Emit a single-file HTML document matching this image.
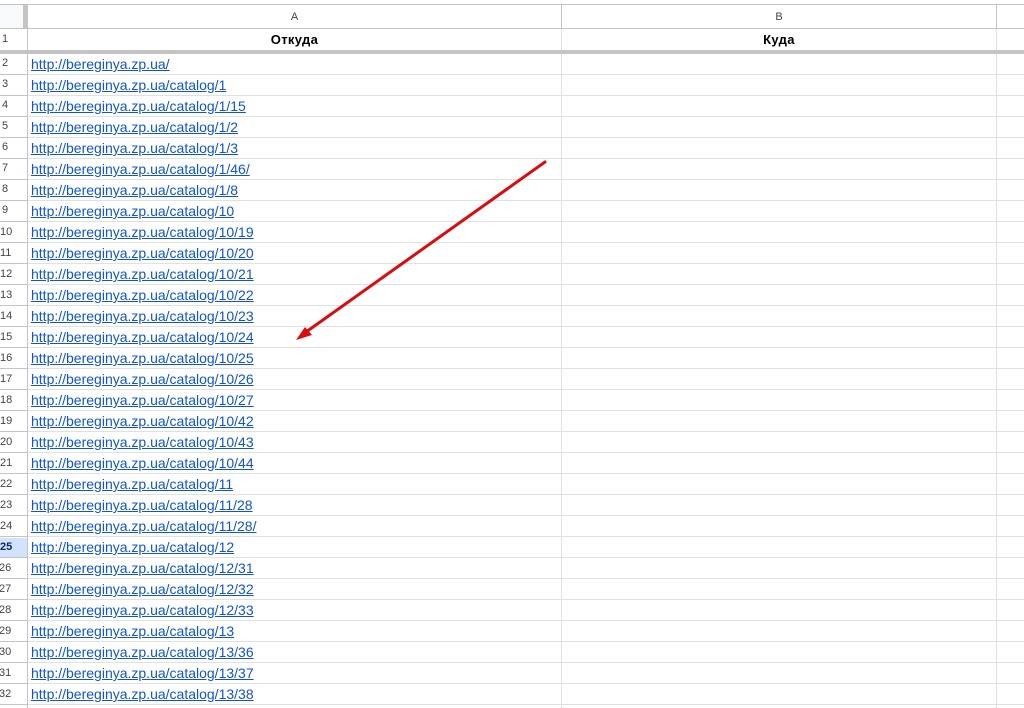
<!DOCTYPE html>
<html><head><meta charset="utf-8"><style>
html,body{margin:0;padding:0;background:#fff;overflow:hidden}
#s{position:relative;width:1024px;height:708px;overflow:hidden;font-family:"Liberation Sans",sans-serif}
.h,.v{position:absolute}
.h{left:0;width:1024px;height:1px;background:linear-gradient(to right,#c4c4c4 27px,#e1e1e1 27px)}
.v{width:1px;background:#e1e1e1}
.n{position:absolute;left:0;margin-top:1px;width:26px;height:20px;line-height:18px;font-size:11px;color:#444;white-space:nowrap}
.l{position:absolute;left:31px;height:20px;line-height:20px;font-size:14px;color:#1155cc;text-decoration:underline;white-space:nowrap}
.t{position:absolute;font-size:13px;font-weight:bold;color:#000;text-align:center;line-height:20px;letter-spacing:.35px}
.c{position:absolute;font-size:11px;color:#444;text-align:center;line-height:14px}
</style></head><body><div id="s">
<div style="position:absolute;left:0;top:5px;width:23px;height:23px;background:#f8f9fa"></div>
<div style="position:absolute;left:23px;top:5px;width:5px;height:23px;background:#c4c4c4"></div>
<div style="position:absolute;left:0;top:538px;width:27px;height:19px;background:#d3e3fd"></div>

<div class="h" style="top:74px"></div><div class="h" style="top:95px"></div><div class="h" style="top:116px"></div><div class="h" style="top:137px"></div><div class="h" style="top:158px"></div><div class="h" style="top:179px"></div><div class="h" style="top:200px"></div><div class="h" style="top:221px"></div><div class="h" style="top:242px"></div><div class="h" style="top:263px"></div><div class="h" style="top:284px"></div><div class="h" style="top:305px"></div><div class="h" style="top:326px"></div><div class="h" style="top:347px"></div><div class="h" style="top:368px"></div><div class="h" style="top:389px"></div><div class="h" style="top:410px"></div><div class="h" style="top:431px"></div><div class="h" style="top:452px"></div><div class="h" style="top:473px"></div><div class="h" style="top:494px"></div><div class="h" style="top:515px"></div><div class="h" style="top:536px"></div><div class="h" style="top:557px"></div><div class="h" style="top:578px"></div><div class="h" style="top:599px"></div><div class="h" style="top:620px"></div><div class="h" style="top:641px"></div><div class="h" style="top:662px"></div><div class="h" style="top:683px"></div><div class="h" style="top:704px"></div>

<div class="v" style="left:27px;top:28px;height:680px;background:#c4c4c4"></div>
<div class="v" style="left:561px;top:4px;height:24px;background:#c4c4c4"></div>
<div class="v" style="left:996px;top:4px;height:24px;background:#c4c4c4"></div>
<div class="v" style="left:561px;top:28px;height:680px"></div>
<div class="v" style="left:996px;top:28px;height:680px"></div>

<div class="h" style="top:4px;background:#c4c4c4"></div>
<div class="h" style="top:28px;background:#c4c4c4"></div>
<div class="h" style="top:50px;height:4px;background:#c4c4c4"></div>

<div class="c" style="left:28px;width:533px;top:10px">A</div>
<div class="c" style="left:562px;width:434px;top:10px">B</div>
<div class="t" style="left:28px;width:533px;top:30px">Откуда</div>
<div class="t" style="left:562px;width:434px;top:30px">Куда</div>

<div class="n" style="left:2px;top:29px">1</div>
<div class="n" style="left:2px;top:53px">2</div>
<div class="n" style="left:2px;top:74px">3</div>
<div class="n" style="left:2px;top:95px">4</div>
<div class="n" style="left:2px;top:116px">5</div>
<div class="n" style="left:2px;top:137px">6</div>
<div class="n" style="left:2px;top:158px">7</div>
<div class="n" style="left:2px;top:179px">8</div>
<div class="n" style="left:2px;top:200px">9</div>
<div class="n" style="top:222px">10</div><div class="n" style="top:243px">11</div><div class="n" style="top:264px">12</div><div class="n" style="top:285px">13</div><div class="n" style="top:306px">14</div><div class="n" style="top:327px">15</div><div class="n" style="top:348px">16</div><div class="n" style="top:369px">17</div><div class="n" style="top:390px">18</div><div class="n" style="top:411px">19</div><div class="n" style="top:432px">20</div><div class="n" style="top:453px">21</div><div class="n" style="top:474px">22</div><div class="n" style="top:495px">23</div><div class="n" style="top:516px">24</div>
<div class="n" style="top:537px;font-weight:bold;color:#0b2a5b">25</div>
<div class="n" style="top:558px;left:-1px">26</div><div class="n" style="top:579px;left:-1px">27</div><div class="n" style="top:600px;left:-1px">28</div><div class="n" style="top:621px;left:-1px">29</div><div class="n" style="top:642px;left:-1px">30</div><div class="n" style="top:663px;left:-1px">31</div><div class="n" style="top:684px;left:-1px">32</div>

<div class="l" style="top:54px">http://bereginya.zp.ua/</div>
<div class="l" style="top:75px">http://bereginya.zp.ua/catalog/1</div>
<div class="l" style="top:96px">http://bereginya.zp.ua/catalog/1/15</div>
<div class="l" style="top:117px">http://bereginya.zp.ua/catalog/1/2</div>
<div class="l" style="top:138px">http://bereginya.zp.ua/catalog/1/3</div>
<div class="l" style="top:159px">http://bereginya.zp.ua/catalog/1/46/</div>
<div class="l" style="top:180px">http://bereginya.zp.ua/catalog/1/8</div>
<div class="l" style="top:201px">http://bereginya.zp.ua/catalog/10</div>
<div class="l" style="top:222px">http://bereginya.zp.ua/catalog/10/19</div>
<div class="l" style="top:243px">http://bereginya.zp.ua/catalog/10/20</div>
<div class="l" style="top:264px">http://bereginya.zp.ua/catalog/10/21</div>
<div class="l" style="top:285px">http://bereginya.zp.ua/catalog/10/22</div>
<div class="l" style="top:306px">http://bereginya.zp.ua/catalog/10/23</div>
<div class="l" style="top:327px">http://bereginya.zp.ua/catalog/10/24</div>
<div class="l" style="top:348px">http://bereginya.zp.ua/catalog/10/25</div>
<div class="l" style="top:369px">http://bereginya.zp.ua/catalog/10/26</div>
<div class="l" style="top:390px">http://bereginya.zp.ua/catalog/10/27</div>
<div class="l" style="top:411px">http://bereginya.zp.ua/catalog/10/42</div>
<div class="l" style="top:432px">http://bereginya.zp.ua/catalog/10/43</div>
<div class="l" style="top:453px">http://bereginya.zp.ua/catalog/10/44</div>
<div class="l" style="top:474px">http://bereginya.zp.ua/catalog/11</div>
<div class="l" style="top:495px">http://bereginya.zp.ua/catalog/11/28</div>
<div class="l" style="top:516px">http://bereginya.zp.ua/catalog/11/28/</div>
<div class="l" style="top:537px">http://bereginya.zp.ua/catalog/12</div>
<div class="l" style="top:558px">http://bereginya.zp.ua/catalog/12/31</div>
<div class="l" style="top:579px">http://bereginya.zp.ua/catalog/12/32</div>
<div class="l" style="top:600px">http://bereginya.zp.ua/catalog/12/33</div>
<div class="l" style="top:621px">http://bereginya.zp.ua/catalog/13</div>
<div class="l" style="top:642px">http://bereginya.zp.ua/catalog/13/36</div>
<div class="l" style="top:663px">http://bereginya.zp.ua/catalog/13/37</div>
<div class="l" style="top:684px">http://bereginya.zp.ua/catalog/13/38</div>

<svg style="position:absolute;left:0;top:0" width="1024" height="708">
<line x1="545" y1="162" x2="306" y2="332" stroke="#d90d0d" stroke-width="3" stroke-linecap="round"/>
<polygon points="296,340 305,327 312,335" fill="#d90d0d"/>
</svg>
</div></body></html>
